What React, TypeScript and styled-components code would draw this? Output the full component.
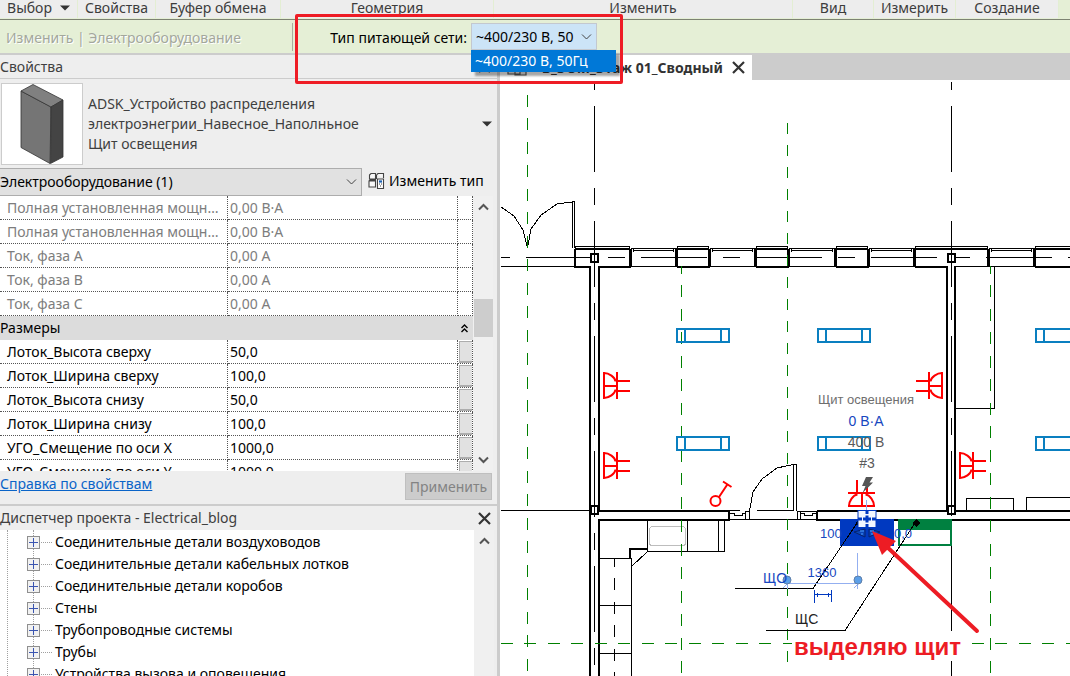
import React from "react";
import styled, { createGlobalStyle, css } from "styled-components";

const GlobalStyle = createGlobalStyle`
  *, *::before, *::after { box-sizing: border-box; }
  body {
    margin: 0;
    background: #eeeeee;
    color: #000;
    font-family: "Noto Sans", "Open Sans", sans-serif;
    font-size: 14px;
    line-height: 20px;
  }
  button, select { font: inherit; color: inherit; margin: 0; }
`;

const Window = styled.div`
  position: relative;
  display: flex;
  flex-direction: column;
  height: 100vh;
  overflow: hidden;
`;

/* ---------- ribbon ---------- */

const Ribbon = styled.div`
  display: grid;
  grid-template-columns: 78fr 78fr 125fr 213fr 299fr 81fr 82fr 103fr 11fr;
  height: 20px;
  flex: none;
  background: #e5efd6;
  border-bottom: 1px solid #7d8372;
  line-height: 16px;
`;

const RibbonPanel = styled.div`
  display: flex;
  justify-content: center;
  align-items: center;
  height: 18px;
  padding-bottom: 2px;
  background: #ededed;
  border-right: 1px solid #e3eed3;
  color: #3c3c3c;
  white-space: nowrap;
`;

const RibbonButton = styled.button`
  display: flex;
  align-items: center;
  gap: 8px;
  padding: 0;
  border: 0;
  background: none;
`;

const OptionsBar = styled.div`
  display: flex;
  align-items: center;
  height: 35px;
  flex: none;
  background: #e5efd6;
  border-bottom: 2px solid #cccccc;
`;

const Mode = styled.div`
  width: 293px;
  height: 28px;
  padding: 5px 6px 3px;
  border-right: 1px solid #a9ae9f;
  color: #a3a79c;
  text-shadow: 1px 1px 0 #fff;
  white-space: nowrap;
`;

const NetField = styled.div`
  position: relative;
  display: flex;
  align-items: center;
  gap: 4px;
  padding-left: 34px;
  label { width: 140px; padding-top: 2px; text-align: right; white-space: nowrap; }
`;

const SelectBox = styled.div`
  position: relative;
  display: flex;
  svg {
    position: absolute;
    right: 5px;
    top: 50%;
    margin-top: -5px;
    pointer-events: none;
  }
`;

const NetSelect = styled.select`
  appearance: none;
  width: 126px;
  height: 27px;
  padding: 0 22px 0 4px;
  border: 1px solid #c3c8cf;
  border-radius: 0;
  background: #cce4f7;
`;

const OptionList = styled.ul`
  position: absolute;
  z-index: 3;
  top: 27px;
  left: 0;
  width: 145px;
  margin: 0;
  padding: 0;
  list-style: none;
  background: #0078d7;
  color: #fff;
  box-shadow: 4px 4px 2px rgba(0, 0, 0, 0.35);
  li { height: 22px; padding-left: 4px; line-height: 22px; white-space: nowrap; }
`;

const Highlight = styled.div`
  position: absolute;
  z-index: 4;
  left: 295px;
  top: 14px;
  width: 328px;
  height: 70px;
  border: 3px solid #ee1c25;
  border-radius: 2px;
  pointer-events: none;
`;

/* ---------- left docks ---------- */

const Main = styled.div`
  display: flex;
  flex: 1;
  min-height: 0;
`;

const Docks = styled.aside`
  display: flex;
  flex-direction: column;
  width: 500px;
  flex: none;
  background: #eeeeee;
  border-right: 3px solid #cccccc;
`;

const DockHeader = styled.header<{ $line?: boolean }>`
  display: flex;
  align-items: center;
  justify-content: space-between;
  height: 24px;
  flex: none;
  padding-right: 6px;
  color: #404040;
  ${(p) => p.$line && css`border-bottom: 1px solid #cccccc;`}
  h2 { margin: 0; font-size: 14px; font-weight: 400; white-space: nowrap; }
`;

const IconButton = styled.button`
  display: flex;
  padding: 0;
  border: 0;
  background: none;
`;

const FamilyPicker = styled.div`
  display: flex;
  align-items: center;
  height: 88px;
  flex: none;
  padding: 2px 5px 0 1px;
  color: #3f3f3f;
  p { flex: 1; margin: 0; padding-left: 5px; }
`;

const Thumb = styled.div`
  width: 82px;
  height: 82px;
  border: 1px solid #cccccc;
  background: #fff;
`;

const FilterRow = styled.div`
  display: flex;
  align-items: center;
  height: 29px;
  flex: none;
`;

const FilterSelect = styled.select`
  appearance: none;
  width: 362px;
  height: 28px;
  padding: 0;
  border: 1px solid #adadad;
  border-left: 0;
  border-radius: 0;
  background: #e1e1e1;
`;

const EditType = styled.button`
  display: flex;
  align-items: center;
  gap: 4px;
  padding: 0 0 2px 6px;
  border: 0;
  background: none;
  white-space: nowrap;
`;

const GridView = styled.div`
  display: flex;
  height: 275px;
  flex: none;
  padding-right: 4px;
  overflow: hidden;
`;

const Table = styled.table`
  flex: 1;
  width: 473px;
  height: 1px;
  table-layout: fixed;
  border-collapse: separate;
  border-spacing: 0;
  background: #fff;
  th, td {
    height: 24px;
    padding: 0 0 0 2px;
    border-right: 1px dotted #555;
    border-bottom: 1px dotted #555;
    font-weight: 400;
    text-align: left;
    line-height: 20px;
    white-space: nowrap;
    overflow: hidden;
  }
  th { padding: 0 6px 0 7px; text-overflow: ellipsis; }
`;

const Row = styled.tr<{ $muted?: boolean }>`
  color: ${(p) => (p.$muted ? "#7d7d7d" : "#000")};
`;

const GroupRow = styled.tr`
  && th {
    padding: 0 5px 0 0;
    border: 0;
    background: #dcdcdc;
  }
  div { display: flex; justify-content: space-between; align-items: center; }
`;

const LinkButton = styled.button`
  display: block;
  width: 13px;
  height: 22px;
  margin-left: -1px;
  border: 1px solid #adadad;
  border-right-width: 2px;
  border-bottom-width: 2px;
  background: #e1e1e1;
`;

const Scroll = styled.div`
  display: flex;
  flex-direction: column;
  align-items: center;
  justify-content: space-between;
  width: 20px;
  flex: none;
  padding: 6px 0;
  background: #f0f0f0;
`;

const ScrollThumb = styled.div`
  width: 19px;
  height: 38px;
  margin: 87px 0 auto;
  background: #cdcdcd;
`;

const PropsFooter = styled.div`
  display: flex;
  justify-content: space-between;
  align-items: center;
  height: 35px;
  flex: none;
  padding: 0 5px 2px 0;
  border-bottom: 2px solid #cccccc;
  a { color: #0a64c8; padding-bottom: 6px; text-decoration: underline; }
`;

const Apply = styled.button`
  height: 27px;
  width: 87px;
  padding: 0;
  border: 1px solid #bfbfbf;
  background: #cccccc;
  color: #838383;
`;

const TreeView = styled.div`
  display: flex;
  flex: 1;
  min-height: 0;
  padding-right: 3px;
`;

const Tree = styled.ul`
  position: relative;
  flex: 1;
  margin: 0;
  padding: 1px 0 0 27px;
  list-style: none;
  overflow: hidden;
  background: #fff;
  &::before, &::after {
    content: "";
    position: absolute;
    top: 0;
    bottom: 0;
    left: 7px;
    border-left: 1px dotted #a0a0a0;
  }
  &::after { left: 33px; }
`;

const TreeItem = styled.li`
  position: relative;
  z-index: 1;
  display: flex;
  align-items: center;
  height: 22px;
  white-space: nowrap;
  &::before {
    content: "";
    order: 1;
    width: 11px;
    margin: 0 3px 0 1px;
    border-top: 1px dotted #a0a0a0;
  }
  span { order: 2; }
`;

const Expander = styled.button`
  display: flex;
  width: 13px;
  height: 13px;
  padding: 0;
  border: 1px solid #8f8f8f;
  background: #f1f1f1;
`;

/* ---------- document ---------- */

const Document = styled.main`
  display: flex;
  flex-direction: column;
  flex: 1;
  min-width: 0;
  background: #fff;
`;

const TabStrip = styled.div`
  display: flex;
  height: 25px;
  flex: none;
  background: #cccccc;
`;

const Tab = styled.div`
  display: flex;
  align-items: center;
  gap: 9px;
  width: 252px;
  padding: 0 7px;
  background: #fff;
  color: #333;
  font-weight: 700;
  white-space: nowrap;
  svg { flex: none; }
  span { flex: 1; min-width: 0; text-align: right; }
`;

const Canvas = styled.svg`
  display: block;
  flex: 1;
  width: 100%;
  min-height: 0;
`;

/* ---------- icons ---------- */

const Caret = () => (
  <svg width="10" height="6" viewBox="0 0 10 6"><path d="M0 0.5h10L5 5.5z" fill="#333" /></svg>
);
const Chevron = ({ up, heavy }: { up?: boolean; heavy?: boolean }) => (
  <svg width="11" height="10" viewBox="0 0 11 10" fill="none" stroke={heavy ? "#555" : "#444"} strokeWidth={heavy ? 2 : 1}>
    <path d={up ? "M1 7.5 5.5 3 10 7.5" : "M1 2.5 5.5 7 10 2.5"} />
  </svg>
);
const Close = () => (
  <svg width="13" height="13" viewBox="0 0 13 13" stroke="#333" strokeWidth="2.2"><path d="M1 1 12 12M12 1 1 12" /></svg>
);
const Cabinet = () => (
  <svg width="80" height="80" viewBox="2 84 80 80" stroke="#333" strokeWidth="0.8" strokeLinejoin="round">
    <path d="M21 91 51 107 50 163.500 21 147.500z" fill="#757575" />
    <path d="M21 91 33 84.500 63 100 51 107z" fill="#808080" />
    <path d="M51 107 63 100V157L50.500 163.500z" fill="#444" />
  </svg>
);
const TypeIcon = () => (
  <svg width="17" height="17" viewBox="0 0 17 17" fill="none" stroke="#444" strokeWidth="1.100">
    <path d="M1.500 3 3 1.500h4.500V7H1.500zM9 2.500 10 1.500h5.500V6M8.500 2.500V7M1 9h6.500v6H1zM1 9l1-1h6" fill="#f8f8f8" />
    <path d="M9.500 7h6v9.500h-6z" fill="#fff" />
    <path d="M11 9.500h3" stroke="#1b62b5" strokeWidth="2.200" />
    <path d="M11 12h1M13 12h1M12 14h1" />
  </svg>
);
const Collapse = () => (
  <svg width="7" height="9" viewBox="0 0 7 9" fill="none" stroke="#000" strokeWidth="1.400"><path d="M0.500 4 3.500 1 6.500 4M0.500 8 3.500 5 6.500 8" /></svg>
);
const ViewIcon = () => (
  <svg width="20" height="16" viewBox="0 0 20 16" fill="#e8e8e8" stroke="#555" strokeWidth="1.200"><path d="M1 3h12v11H1zM8 6h11v9H8z" /></svg>
);
const Plus = () => (
  <svg width="11" height="11" viewBox="0 0 11 11" stroke="#3b55b0" shapeRendering="crispEdges"><path d="M1 5.500h9M5.500 1v9" /></svg>
);

/* ---------- floor plan ---------- */

const AXIS = "66 16 17 16";
const GRID = "12 11 12 12";

const Light = ({ x, y }: { x: number; y: number }) => (
  <path d={`M${x} ${y}h52v13h-52zM${x + 8} ${y}v13M${x + 44} ${y}v13`} stroke="#0a7fc0" strokeWidth="2" />
);

const Socket = ({ at }: { at: string }) => (
  <path transform={at} d="M1 0V27M1 1C6 1 12 5 12.500 9.500M1 26C6 26 12 22 12.500 17.500M1 14H14M14 0V27M14 9H27M14 19H27" stroke="#ff0000" strokeWidth="2" />
);

const Pier = ({ x, w }: { x: number; w: number }) => (
  <>
    <path d={`M${x} 249H${x + w}`} strokeWidth="2" />
    <path d={`M${x + 0.5} 249V246.500H${x + w - 0.5}V249`} />
  </>
);

const WindowOpening = ({ from, to }: { from: number; to: number }) => (
  <>
    <path d={`M${from} 248.500H${to}M${from + 3} 250.500H${to - 3}M${from} 266.500H${to}M${from + 3} 249V252M${to - 3} 249V252`} />
    <path d={`M${from} 249V267M${to} 249V267`} strokeWidth="3" />
  </>
);

const Plan = () => (
  <Canvas viewBox="500 80 570 596" preserveAspectRatio="xMinYMin slice" fill="none" stroke="#000" shapeRendering="crispEdges" role="img" aria-label="План этажа">
    <path d="M594.500 82V676M951.500 82V516" strokeDasharray={AXIS} strokeDashoffset="91" />
    <path d="M951.500 533V631M951.500 661V676" />
    <path d="M501 257.500H1070" strokeDasharray={AXIS} strokeDashoffset="90" />

    {[[575, 55], [677, 32], [756, 32], [836, 32], [915, 73], [1035, 60]].map(([x, w]) => (
      <Pier key={x} x={x} w={w} />
    ))}
    {[[630.5, 676.5], [709.5, 755.5], [788.5, 835.5], [868.5, 914.5], [988.5, 1034.5]].map(([from, to]) => (
      <WindowOpening key={from} from={from} to={to} />
    ))}
    <path d="M501 266.500H575M956 266.500H989" />
    <path strokeWidth="2" d="M575 249V267H590V676M599 511V267H631M677 267H710M756 267H789M836 267H869M915 267H947V511M955 511V266" />
    <path strokeWidth="2" d="M1035 267H1070" />

    <path d="M572.500 248V201.500H574.500V248M572 202 557 204 541 215 531 229 527.500 248 523 230 514 216 501 207" />

    <path strokeWidth="2" d="M599 511H729V520H599V676M817 511H1070M817 511V520H1070" />
    <path d="M501 510.500H590M729 510.500H740M757 510.500H793M729 519.500H817M745.500 511V519M749.500 519V511M745 511.500H749M730 513.500H734V515.500H742V513.500H746M797.500 511V519M800.500 511V519M797 511.500H817M801 513.500H804V515.500H812V513.500H816" />
    <path d="M793.500 511V464.500H796.500V511M749.500 511 753 492 762 479 777 468 793 464.500" />

    <path d="M647.500 521V551.500H724.500V521M687.500 521V551M718.500 521V551M647 552 632 566M600 558.500H631.500V676M600 605.500H631M600 653.500H631" />
    <path strokeWidth="2" d="M630 558V549H648" />
    <rect x="649.500" y="526.500" width="36" height="19" rx="3" stroke="#bdbdbd" />
    <path d="M614.500 559V676" strokeDasharray={GRID} strokeDashoffset="4" />
    <path d="M994.500 267V408.500H956M966.500 511V498.500H1013.500V511M1026.500 511V497.500H1070" />

    {[[594, 258], [951, 258], [594, 510], [951, 510]].map(([x, y]) => (
      <g key={`${x}-${y}`}>
        <rect x={x - 3} y={y - 4} width="7" height="8" fill="#fff" strokeWidth="2" />
        <path d={`M${x + 0.5} ${y - 3}V${y + 4}`} />
      </g>
    ))}

    <g stroke="#008000">
      <path d="M527.500 95V676" strokeDasharray={GRID} />
      <path d="M681.500 266V676M990.500 266V676" strokeDasharray={GRID} strokeDashoffset="4" />
      <path d="M787.500 123V666" strokeDasharray="11 11" />
      <path d="M501 643.500H792M972 643.500H1070" strokeDasharray={GRID} />
    </g>

    {[677, 818, 1036].map((x) => (
      <React.Fragment key={x}>
        <Light x={x} y={329} />
        <Light x={x} y={437} />
      </React.Fragment>
    ))}

    <g shapeRendering="auto">
      <Socket at="translate(603 372)" />
      <Socket at="translate(603 452)" />
      <Socket at="translate(943 372) scale(-1 1)" />
      <Socket at="translate(959 452)" />
      <Socket at="translate(848 507) rotate(-90)" />
      <g stroke="#ff0000" strokeWidth="2">
        <circle cx="715.500" cy="501" r="5" />
        <path d="M719 497 727 485M723 481.500 731.500 487" />
      </g>
    </g>

    <path d="M840 519H894V546H840z" fill="#0039c0" stroke="none" />
    <path d="M899 530V544.500H951V530" stroke="#008040" strokeWidth="2" />
    <path d="M898 519H952V530H898z" fill="#008040" stroke="none" />
    <path d="M735 588.500H813L857 523M766 630.500H845L915 523" />
    <path d="M912 523 916 519 920 523 916 527zM855 523 858 520V526z" fill="#000" stroke="none" />

    <g shapeRendering="auto">
      <path d="M866 477H873L869.500 482.500H873L862.500 493 865.500 486H862z" fill="#555" stroke="none" />
      <path d="M866.500 500V511M857.500 553V589M787.500 583V589M787 583.500H858M783 588 787 584M854 588 858 584" stroke="#93aff0" />
      <rect x="858" y="510.500" width="18" height="17" fill="#f2f7ff" stroke="#0039c0" />
      <path d="M867 510V514M867 524V528M858 519H862M872 519H876M867 515.500V522.500M863 519H871" stroke="#0039c0" strokeWidth="3" />
      <path d="M854 532 865 529V537zM880 532 869 529V537z" fill="#0a45b8" stroke="#06236e" />
      <path d="M860 531H864M870 531H874M861 534H863M871 534H873" stroke="#4da0ff" />
      <circle cx="787" cy="580" r="4" fill="#5c9fe8" stroke="#5f7fa8" />
      <circle cx="858" cy="580" r="4" fill="#5c9fe8" stroke="#5f7fa8" />
    </g>
    <path d="M814.500 590V603M831.500 590V602M815 594.500H831M817.500 592.500V597M828.500 592.500V597" stroke="#0039c0" />

    <g stroke="none" fontFamily='"Liberation Sans", Arial, sans-serif' fontSize="14" fill="#1747c0" shapeRendering="auto">
      <g textAnchor="middle">
        <text x="866" y="404" fontSize="13" fill="#6e6e6e">Щит освещения</text>
        <text x="866" y="426">0 В·А</text>
        <text x="866" y="447" fill="#5a5a5a">400 В</text>
        <text x="867" y="468" fill="#5a5a5a">#3</text>
        <text x="822" y="577" fontSize="13">1360</text>
      </g>
      <text x="820" y="538" fontSize="13">100</text>
      <text x="894" y="538" fontSize="13">0,0</text>
      <g fontFamily='"Liberation Sans Narrow", "Liberation Sans", sans-serif' fontSize="14">
        <text x="763" y="583">ЩО</text>
        <text x="795" y="624" fill="#222">ЩС</text>
      </g>
      <text x="794" y="655" fontSize="24" fontWeight="700" fill="#ed1c24">выделяю щит</text>
    </g>

    <g shapeRendering="auto">
      <path d="M886 546 977 631" stroke="#ed1c24" strokeWidth="4" strokeLinecap="round" />
      <path d="M872 531 896 541 882 555z" fill="#ed1c24" stroke="none" />
    </g>
  </Canvas>
);

/* ---------- data ---------- */

const ribbonPanels = ["Свойства", "Буфер обмена", "Геометрия", "Изменить", "Вид", "Измерить", "Создание"];

const electrical: [string, string][] = [
  ["Полная установленная мощность", "0,00 В·А"],
  ["Полная установленная мощность", "0,00 В·А"],
  ["Ток, фаза A", "0,00 А"],
  ["Ток, фаза B", "0,00 А"],
  ["Ток, фаза C", "0,00 А"],
];

const dimensions: [string, string][] = [
  ["Лоток_Высота сверху", "50,0"],
  ["Лоток_Ширина сверху", "100,0"],
  ["Лоток_Высота снизу", "50,0"],
  ["Лоток_Ширина снизу", "100,0"],
  ["УГО_Смещение по оси X", "1000,0"],
  ["УГО_Смещение по оси Y", "1000,0"],
];

const families = [
  "Соединительные детали воздуховодов",
  "Соединительные детали кабельных лотков",
  "Соединительные детали коробов",
  "Стены",
  "Трубопроводные системы",
  "Трубы",
  "Устройства вызова и оповещения",
];

export default function App() {
  return (
    <Window>
      <GlobalStyle />
      <Ribbon>
        <RibbonPanel>
          <RibbonButton>Выбор <Caret /></RibbonButton>
        </RibbonPanel>
        {ribbonPanels.map((name) => <RibbonPanel key={name}>{name}</RibbonPanel>)}
      </Ribbon>

      <OptionsBar>
        <Mode>Изменить | Электрооборудование</Mode>
        <NetField>
          <label htmlFor="net">Тип питающей сети:</label>
          <SelectBox>
            <NetSelect id="net"><option>~400/230 В, 50Гц</option></NetSelect>
            <Chevron />
            <OptionList role="listbox">
              <li role="option" aria-selected="true">~400/230 В, 50Гц</li>
            </OptionList>
          </SelectBox>
        </NetField>
      </OptionsBar>

      <Main>
        <Docks>
          <DockHeader $line>
            <h2>Свойства</h2>
            <IconButton aria-label="Закрыть свойства"><Close /></IconButton>
          </DockHeader>
          <FamilyPicker>
            <Thumb><Cabinet /></Thumb>
            <p>ADSK_Устройство распределения<br />электроэнегрии_Навесное_Наполньное<br />Щит освещения</p>
            <IconButton aria-label="Выбрать тип"><Caret /></IconButton>
          </FamilyPicker>
          <FilterRow>
            <SelectBox>
              <FilterSelect aria-label="Фильтр"><option>Электрооборудование (1)</option></FilterSelect>
              <Chevron />
            </SelectBox>
            <EditType><TypeIcon />Изменить тип</EditType>
          </FilterRow>
          <GridView>
            <Table>
              <colgroup><col width="228" /><col /><col width="15" /></colgroup>
              <tbody>
                {electrical.map(([name, value], i) => (
                  <Row key={i} $muted><th scope="row">{name}</th><td>{value}</td><td /></Row>
                ))}
                <GroupRow><th colSpan={3}><div>Размеры<Collapse /></div></th></GroupRow>
                {dimensions.map(([name, value]) => (
                  <Row key={name}>
                    <th scope="row">{name}</th><td>{value}</td>
                    <td><LinkButton aria-label={`Связать ${name}`} /></td>
                  </Row>
                ))}
              </tbody>
            </Table>
            <Scroll>
              <Chevron up heavy />
              <ScrollThumb />
              <Chevron heavy />
            </Scroll>
          </GridView>
          <PropsFooter>
            <a href="#help">Справка по свойствам</a>
            <Apply disabled>Применить</Apply>
          </PropsFooter>
          <DockHeader>
            <h2>Диспетчер проекта - Electrical_blog</h2>
            <IconButton aria-label="Закрыть диспетчер"><Close /></IconButton>
          </DockHeader>
          <TreeView>
            <Tree>
              {families.map((name) => (
                <TreeItem key={name}>
                  <Expander aria-label={`Развернуть ${name}`}><Plus /></Expander>
                  <span>{name}</span>
                </TreeItem>
              ))}
            </Tree>
            <Scroll><Chevron up heavy /></Scroll>
          </TreeView>
        </Docks>

        <Document>
          <TabStrip>
            <Tab>
              <ViewIcon />
              <span>В_ЭОМ_Этаж 01_Сводный</span>
              <IconButton aria-label="Закрыть вид"><Close /></IconButton>
            </Tab>
          </TabStrip>
          <Plan />
        </Document>
      </Main>
      <Highlight />
    </Window>
  );
}
